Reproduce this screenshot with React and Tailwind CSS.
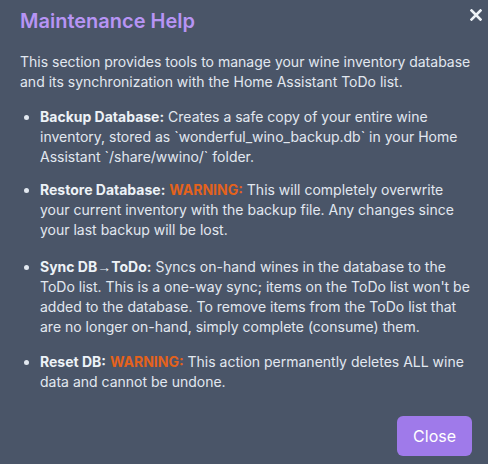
import React from "react";

export default function App() {
  return (
    <div
      className="relative w-[488px] h-[464px] bg-[#4a5568] text-[#e2e8f0] pl-5 pr-4 pt-[7px]"
      style={{ fontFamily: "Inter, 'Noto Sans', sans-serif" }}
    >
      {/* close icon */}
      <button className="absolute top-[9px] left-[470px] text-[#edf2f7]">
        <svg width="12" height="12" viewBox="0 0 12 12" fill="none">
          <path d="M1.5 1.5 L10.5 10.5 M10.5 1.5 L1.5 10.5" stroke="currentColor" strokeWidth="2.6" strokeLinecap="square" />
        </svg>
      </button>

      <h2 className="text-xl leading-7 font-semibold text-[#b794f4] mb-[17px]">Maintenance Help</h2>

      <p className="text-sm leading-5 mb-[15px]">
        This section provides tools to manage your wine inventory database and its synchronization with the Home
        Assistant ToDo list.
      </p>

      <ul className="list-disc pl-5 text-sm leading-5">
        <li>
          <strong className="font-bold text-[#edf2f7]">Backup Database:</strong> Creates a safe copy of your entire
          wine inventory, stored as `wonderful_wino_backup.db` in your Home Assistant `/share/wwino/` folder.
        </li>
        <li className="mt-[13px]">
          <strong className="font-bold text-[#edf2f7]">Restore Database:</strong>{" "}
          <span className="font-bold text-[#e4621c]">WARNING:</span> This will completely overwrite your current
          inventory with the backup file. Any changes since your last backup will be lost.
        </li>
        <li className="mt-[17px]">
          <strong className="font-bold text-[#edf2f7]">
            Sync DB<span className="font-normal font-['Liberation_Sans']">→</span>ToDo:
          </strong>{" "}
          Syncs on-hand wines in the database to the ToDo list. This is a one-way sync; items on the ToDo list won't be
          added to the database. To remove items from the ToDo list that are no longer on-hand, simply complete
          (consume) them.
        </li>
        <li className="mt-[15px]">
          <strong className="font-bold text-[#edf2f7]">Reset DB:</strong>{" "}
          <span className="font-bold text-[#e4621c]">WARNING:</span> This action permanently deletes ALL wine data and
          cannot be undone.
        </li>
      </ul>

      <div className="flex justify-end mt-6">
        <button className="bg-[#9f7aea] text-white text-base leading-6 px-4 py-2 rounded-md">Close</button>
      </div>
    </div>
  );
}
